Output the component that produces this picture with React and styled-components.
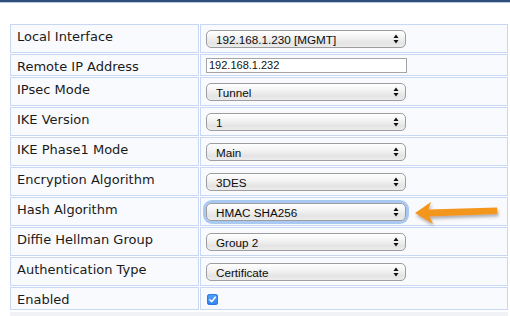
import React from "react";
import styled, { createGlobalStyle, css } from "styled-components";

const Global = createGlobalStyle`
  html, body { margin: 0; padding: 0; background: #ffffff; }
  body { width: 510px; height: 316px; overflow: hidden; position: relative; }
`;

const TopBar = styled.div`
  height: 2px;
  background: #2f4e7c;
  border-bottom: 1px solid #b9c7dc;
`;

const Form = styled.div`
  display: grid;
  grid-template-columns: 189px 308px;
  gap: 1px;
  margin: 21px 0 0 10px;
`;

const Cell = styled.div`
  box-sizing: border-box;
  height: ${(p) => p.$h}px;
  border: 1px solid #c8d8f2;
  background: #f9fafe;
`;

const Label = styled(Cell)`
  padding: 4px 0 0 6px;
  font-family: "DejaVu Sans", Verdana, sans-serif;
  font-size: 13px;
  line-height: 16px;
  color: #1a1a1a;
  white-space: nowrap;
`;

const Value = styled(Cell)`
  display: flex;
  align-items: center;
  padding-left: 5px;
`;

const SelectWrap = styled.div`
  position: relative;
  width: 200px;
  height: 18px;
  border-radius: 6px;
  ${(p) =>
    p.$focus &&
    css`
      box-shadow: 0 0 0 3px #a9c9f3;
    `}
`;

const NativeSelect = styled.select`
  appearance: none;
  -webkit-appearance: none;
  box-sizing: border-box;
  width: 200px;
  height: 18px;
  margin: 0;
  padding: 0 0 0 9px;
  border: 1px solid #9d9d9d;
  border-radius: 5px;
  background: linear-gradient(#ffffff 0%, #f3f3f3 40%, #e4e4e4 75%, #ececec 100%);
  font-family: "Liberation Sans", Arial, sans-serif;
  font-size: 11.7px;
  color: #0c0c0c;
  outline: none;
`;

const Arrows = styled.svg`
  position: absolute;
  right: 7px;
  top: 4px;
  pointer-events: none;
`;

const TextInput = styled.input`
  box-sizing: border-box;
  width: 201px;
  height: 15px;
  margin: 0;
  padding: 0 2px;
  border: 1px solid #a4a4a4;
  background: #fff;
  font-family: "Liberation Sans", Arial, sans-serif;
  font-size: 11px;
  color: #111;
  outline: none;
`;

const Check = styled.span`
  display: inline-flex;
  align-items: center;
  justify-content: center;
  width: 11px;
  height: 11px;
  margin: 2px 0 0 1px;
  border-radius: 3px;
  background: linear-gradient(#56a4fb, #2f84f2);
  box-shadow: inset 0 0 0 1px #2d7ae0;
`;

const Strip = styled.div`
  margin: 2px 0 0 10px;
  width: 498px;
  height: 10px;
  background: #f0f2f6;
`;

const Pointer = styled.svg`
  position: absolute;
  left: 410px;
  top: 195px;
`;

function Select({ value, focus }) {
  return (
    <SelectWrap $focus={focus}>
      <NativeSelect defaultValue={value}>
        <option>{value}</option>
      </NativeSelect>
      <Arrows width="6" height="10" viewBox="0 0 6 10">
        <path d="M0.5 4 L3 0.6 L5.5 4 Z" fill="#111" />
        <path d="M0.5 6 L3 9.4 L5.5 6 Z" fill="#111" />
      </Arrows>
    </SelectWrap>
  );
}

const rows = [
  { label: "Local Interface", kind: "select", value: "192.168.1.230 [MGMT]", h: 29 },
  { label: "Remote IP Address", kind: "input", value: "192.168.1.232", h: 22 },
  { label: "IPsec Mode", kind: "select", value: "Tunnel", h: 29 },
  { label: "IKE Version", kind: "select", value: "1", h: 29 },
  { label: "IKE Phase1 Mode", kind: "select", value: "Main", h: 29 },
  { label: "Encryption Algorithm", kind: "select", value: "3DES", h: 29 },
  { label: "Hash Algorithm", kind: "select", value: "HMAC SHA256", h: 29, focus: true },
  { label: "Diffie Hellman Group", kind: "select", value: "Group 2", h: 29 },
  { label: "Authentication Type", kind: "select", value: "Certificate", h: 29 },
  { label: "Enabled", kind: "check", h: 23 },
];

export default function App() {
  return (
    <>
      <Global />
      <TopBar />
      <Form>
        {rows.map((r) => (
          <React.Fragment key={r.label}>
            <Label $h={r.h}>{r.label}</Label>
            <Value $h={r.h}>
              {r.kind === "select" && <Select value={r.value} focus={r.focus} />}
              {r.kind === "input" && <TextInput defaultValue={r.value} />}
              {r.kind === "check" && (
                <Check>
                  <svg width="9" height="9" viewBox="0 0 9 9">
                    <path d="M1.8 4.8 L3.7 6.7 L7.3 2.2" stroke="#fff" strokeWidth="1.5" fill="none" strokeLinecap="round" strokeLinejoin="round" />
                  </svg>
                </Check>
              )}
            </Value>
          </React.Fragment>
        ))}
      </Form>
      <Strip />
      <Pointer width="96" height="38" viewBox="0 0 96 38">
        <defs>
          <filter id="sh" x="-20%" y="-40%" width="140%" height="200%">
            <feDropShadow dx="1" dy="2.5" stdDeviation="1.6" floodColor="#555" floodOpacity="0.45" />
          </filter>
        </defs>
        <path
          d="M5 18 L21 7 L18.5 14.5 L87 12.5 L87.5 19 L19.5 21.5 L23 29 Z"
          fill="#f5961c"
          filter="url(#sh)"
        />
      </Pointer>
    </>
  );
}
